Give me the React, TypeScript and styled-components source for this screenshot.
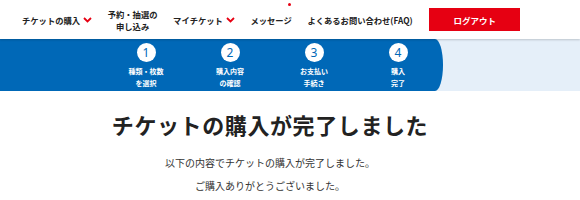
import styled, { createGlobalStyle } from "styled-components";

const GlobalStyle = createGlobalStyle`
  body {
    margin: 0;
    background: #fff;
    font-family: "Noto Sans CJK JP", "Noto Sans", sans-serif;
    color: #222;
  }
`;

const RED = "#e60012";
const BLUE = "#0068b7";

const Header = styled.header`
  height: 39px;
  display: flex;
  align-items: center;
  gap: 15.6px;
  padding-left: 22px;
  position: relative;
  z-index: 1;
  box-shadow: 0 1px 2px rgba(0, 0, 0, 0.18);
  background: #fff;
`;

const NavItem = styled.div`
  position: relative;
  display: flex;
  align-items: center;
  gap: 3px;
  font-size: 8.3px;
  font-weight: 700;
  line-height: 12px;
  text-align: center;
  white-space: nowrap;
`;

const Dot = styled.span`
  position: absolute;
  right: 1px;
  top: -11px;
  width: 3px;
  height: 3px;
  border-radius: 50%;
  background: ${RED};
`;

const LogoutButton = styled.button`
  width: 91px;
  height: 23px;
  margin-left: 1px;
  border: none;
  background: ${RED};
  color: #fff;
  font-family: inherit;
  font-size: 8.5px;
  font-weight: 700;
  padding: 0;
`;

const Band = styled.div`
  height: 52px;
  background: #e5eff9;
`;

const StepsPanel = styled.ol`
  margin: 0;
  width: 336px;
  height: 100%;
  padding: 0 3px 0 104px;
  list-style: none;
  display: flex;
  background: ${BLUE};
  border-radius: 0 8px 8px 0 / 0 26px 26px 0;
`;

const Step = styled.li`
  width: 84px;
  display: flex;
  flex-direction: column;
  align-items: center;
  padding-top: 4px;
`;

const Circle = styled.span`
  width: 19px;
  height: 19px;
  border-radius: 50%;
  background: #fff;
  color: ${BLUE};
  font-family: "Noto Sans", sans-serif;
  font-size: 12px;
  line-height: 19px;
  text-align: center;
`;

const StepLabel = styled.span`
  margin-top: 3px;
  color: #fff;
  font-size: 7px;
  font-weight: 700;
  line-height: 12px;
  text-align: center;
  white-space: pre-line;
`;

const Main = styled.main`
  padding-right: 40px;
  text-align: center;
`;

const Title = styled.h1`
  margin: 17px 0 0;
  font-size: 22px;
  line-height: 33px;
  font-weight: 700;
  letter-spacing: 0.6px;
  color: #222;
`;

const Message = styled.p`
  margin: 10px 0 0;
  font-size: 10px;
  line-height: 23px;
  color: #333;
`;

const Chevron = () => (
  <svg width="9" height="6" viewBox="0 0 9 6">
    <path d="M1 1 L4.5 4.5 L8 1" fill="none" stroke={RED} strokeWidth="1.8" />
  </svg>
);

const steps = [
  { n: 1, label: "種類・枚数\nを選択" },
  { n: 2, label: "購入内容\nの確認" },
  { n: 3, label: "お支払い\n手続き" },
  { n: 4, label: "購入\n完了" },
];

export default function App() {
  return (
    <>
      <GlobalStyle />
      <Header>
        <NavItem>
          チケットの購入
          <Chevron />
        </NavItem>
        <NavItem>
          予約・抽選の
          <br />
          申し込み
        </NavItem>
        <NavItem>
          マイチケット
          <Chevron />
        </NavItem>
        <NavItem>
          メッセージ
          <Dot />
        </NavItem>
        <NavItem>よくあるお問い合わせ(FAQ)</NavItem>
        <LogoutButton>ログアウト</LogoutButton>
      </Header>
      <Band>
        <StepsPanel>
          {steps.map((s) => (
            <Step key={s.n}>
              <Circle>{s.n}</Circle>
              <StepLabel>{s.label}</StepLabel>
            </Step>
          ))}
        </StepsPanel>
      </Band>
      <Main>
        <Title>チケットの購入が完了しました</Title>
        <Message>
          以下の内容でチケットの購入が完了しました。
          <br />
          ご購入ありがとうございました。
        </Message>
      </Main>
    </>
  );
}
